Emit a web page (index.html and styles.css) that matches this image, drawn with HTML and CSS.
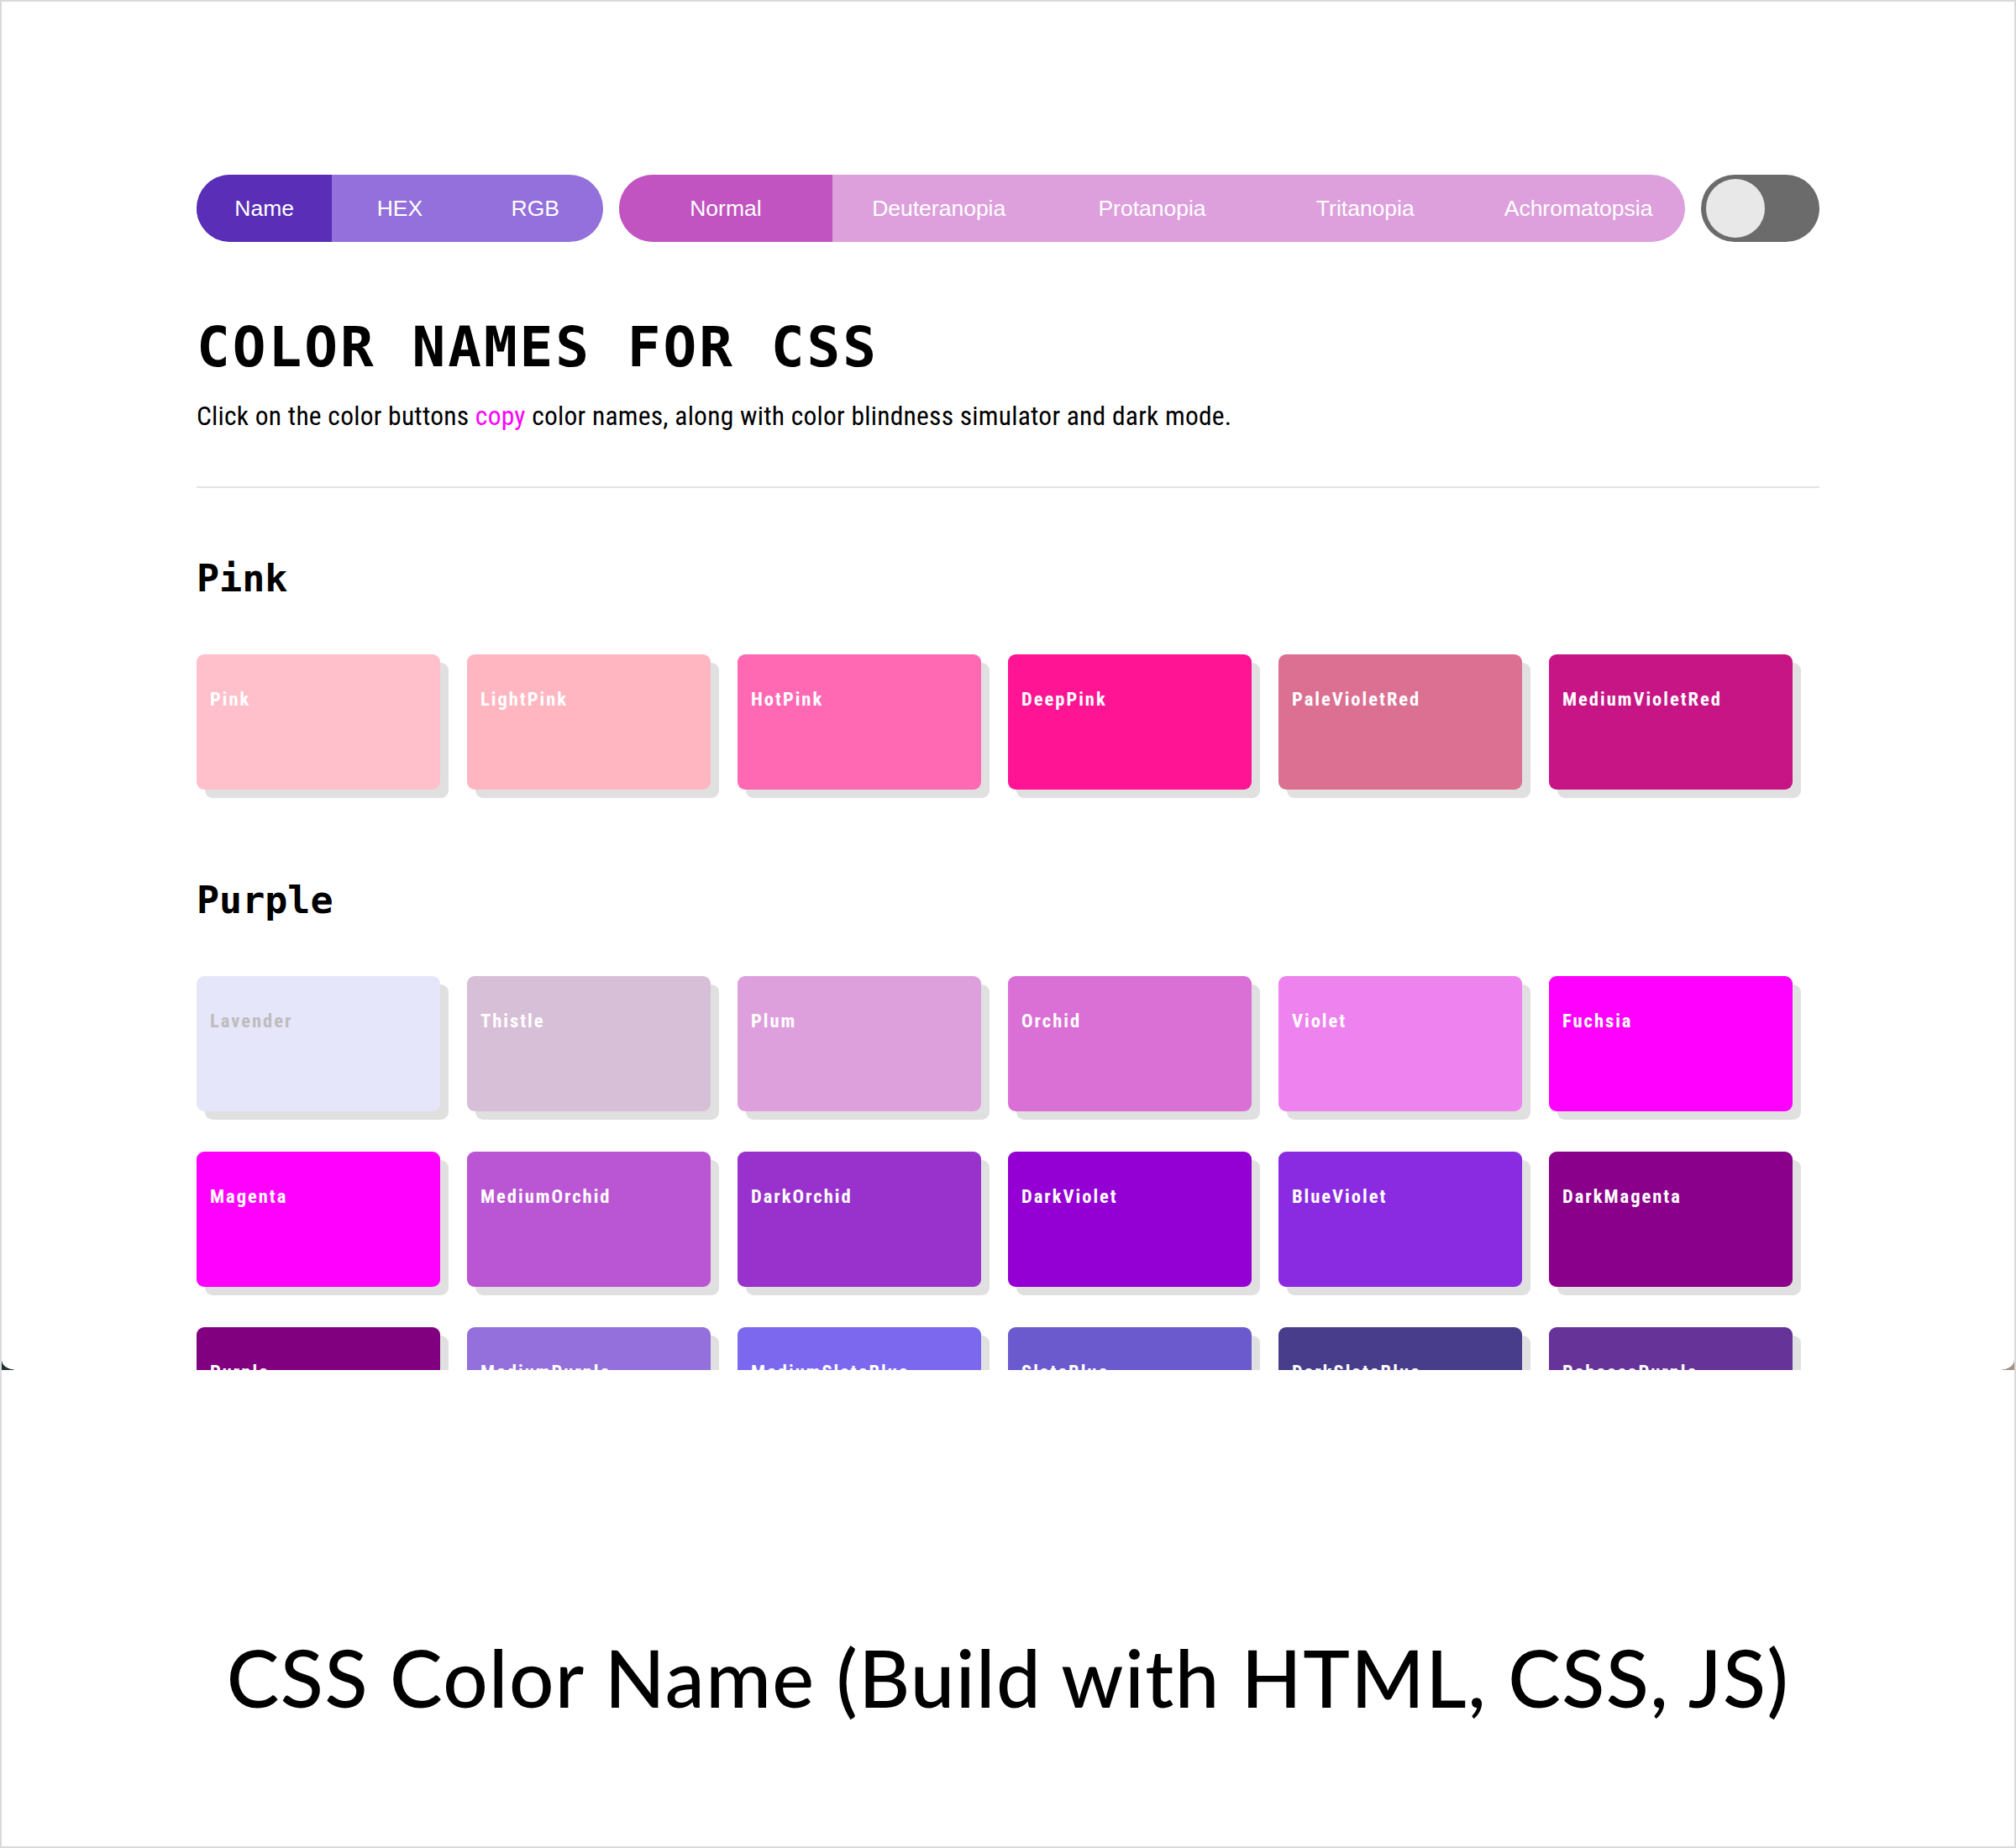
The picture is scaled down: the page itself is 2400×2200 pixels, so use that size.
FILE: index.html
```html
<!DOCTYPE html>
<html lang="en">
<head>
<meta charset="utf-8">
<title>CSS Color Name</title>
<link rel="stylesheet" href="styles.css">
</head>
<body>
<div class="frame">
  <div class="shot">
    <div class="container">
      <div class="toolbar">
        <div class="pill pill-format">
          <button class="seg active">Name</button>
          <button class="seg">HEX</button>
          <button class="seg">RGB</button>
        </div>
        <div class="pill pill-vision">
          <button class="seg active">Normal</button>
          <button class="seg">Deuteranopia</button>
          <button class="seg">Protanopia</button>
          <button class="seg">Tritanopia</button>
          <button class="seg">Achromatopsia</button>
        </div>
        <div class="toggle"><span class="knob"></span></div>
      </div>

      <h1 class="title">COLOR NAMES FOR CSS</h1>
      <p class="intro">Click on the color buttons <span class="copy">copy</span> color names, along with color blindness simulator and dark mode.</p>
      <hr class="divider">

      <section class="group group-pink">
        <h2 class="group-title">Pink</h2>
        <div class="swatches">
          <div class="swatch" style="background:#FFC0CB"><span class="label">Pink</span></div>
          <div class="swatch" style="background:#FFB6C1"><span class="label">LightPink</span></div>
          <div class="swatch" style="background:#FF69B4"><span class="label">HotPink</span></div>
          <div class="swatch" style="background:#FF1493"><span class="label">DeepPink</span></div>
          <div class="swatch" style="background:#DB7093"><span class="label">PaleVioletRed</span></div>
          <div class="swatch" style="background:#C71585"><span class="label">MediumVioletRed</span></div>
        </div>
      </section>

      <section class="group group-purple">
        <h2 class="group-title">Purple</h2>
        <div class="swatches">
          <div class="swatch" style="background:#E6E6FA"><span class="label label-dark">Lavender</span></div>
          <div class="swatch" style="background:#D8BFD8"><span class="label">Thistle</span></div>
          <div class="swatch" style="background:#DDA0DD"><span class="label">Plum</span></div>
          <div class="swatch" style="background:#DA70D6"><span class="label">Orchid</span></div>
          <div class="swatch" style="background:#EE82EE"><span class="label">Violet</span></div>
          <div class="swatch" style="background:#FF00FF"><span class="label">Fuchsia</span></div>
          <div class="swatch" style="background:#FF00FF"><span class="label">Magenta</span></div>
          <div class="swatch" style="background:#BA55D3"><span class="label">MediumOrchid</span></div>
          <div class="swatch" style="background:#9932CC"><span class="label">DarkOrchid</span></div>
          <div class="swatch" style="background:#9400D3"><span class="label">DarkViolet</span></div>
          <div class="swatch" style="background:#8A2BE2"><span class="label">BlueViolet</span></div>
          <div class="swatch" style="background:#8B008B"><span class="label">DarkMagenta</span></div>
          <div class="swatch" style="background:#800080"><span class="label">Purple</span></div>
          <div class="swatch" style="background:#9370DB"><span class="label">MediumPurple</span></div>
          <div class="swatch" style="background:#7B68EE"><span class="label">MediumSlateBlue</span></div>
          <div class="swatch" style="background:#6A5ACD"><span class="label">SlateBlue</span></div>
          <div class="swatch" style="background:#483D8B"><span class="label">DarkSlateBlue</span></div>
          <div class="swatch" style="background:#663399"><span class="label">RebeccaPurple</span></div>
        </div>
      </section>
    </div>
  </div>
  <div class="caption">CSS Color Name (Build with HTML, CSS, JS)</div>
</div>
</body>
</html>
```
FILE: styles.css
```css
* { box-sizing: border-box; }

html, body {
  margin: 0;
  padding: 0;
  background: #ffffff;
}

.frame {
  width: 2400px;
  height: 2200px;
  border: 2px solid #dadada;
  background: #ffffff;
}

.shot {
  position: relative;
  height: 1629px;
  overflow: hidden;
  padding-top: 206px;
  background: #ffffff;
}

.shot::before,
.shot::after {
  content: "";
  position: absolute;
  bottom: 0;
  width: 18px;
  height: 11px;
  z-index: 2;
}

.shot::before {
  left: 0;
  background: radial-gradient(ellipse 18px 11px at 100% 0, transparent 96%, #1e3232 100%);
}

.shot::after {
  right: 0;
  background: radial-gradient(ellipse 18px 11px at 0 0, transparent 96%, #a39383 100%);
}

.container {
  width: 1932px;
  margin: 0 auto;
}

/* ---------- toolbar ---------- */
.toolbar {
  display: flex;
  gap: 19px;
  height: 80px;
}

.pill {
  display: flex;
  border-radius: 40px;
  overflow: hidden;
  height: 80px;
}

.pill-format {
  width: 484px;
  background: #9370db;
}

.pill-vision {
  flex: 1;
  background: #dda0dd;
}

.seg {
  flex: 1;
  border: 0;
  margin: 0;
  padding: 0;
  background: transparent;
  color: #ffffff;
  font-family: "Liberation Sans", Arial, sans-serif;
  font-size: 26.5px;
  height: 80px;
  cursor: pointer;
}

.pill-format .seg.active { background: #5a2eb6; }
.pill-vision .seg.active { background: #c154c1; }

.toggle {
  width: 141px;
  height: 80px;
  border-radius: 40px;
  background: #6b6b6b;
  padding: 5px 6px;
}

.knob {
  display: block;
  width: 70px;
  height: 70px;
  border-radius: 50%;
  background: #e8e8e8;
}

/* ---------- heading ---------- */
.title {
  margin: 93px 0 0;
  font-family: "DejaVu Sans Mono", "Liberation Mono", monospace;
  font-weight: 700;
  font-size: 66px;
  line-height: 66px;
  letter-spacing: 3px;
  color: #000000;
}

.intro {
  margin: 33px 0 0;
  font-family: "Roboto Condensed", Roboto, sans-serif;
  font-size: 31.5px;
  line-height: 31px;
  letter-spacing: 0.25px;
  color: #000000;
}

.copy { color: #ff00ff; }

.divider {
  margin: 68px 0 0;
  border: 0;
  height: 2px;
  background: #e3e3e3;
}

/* ---------- groups ---------- */
.group-pink { margin-top: 85px; }
.group-purple { margin-top: 109px; }

.group-title {
  margin: 0 0 68px;
  font-family: "DejaVu Sans Mono", "Liberation Mono", monospace;
  font-weight: 700;
  font-size: 45px;
  line-height: 45px;
  color: #000000;
}

.swatches {
  display: grid;
  grid-template-columns: repeat(6, 290px);
  column-gap: 32px;
  row-gap: 48px;
}

.swatch {
  height: 161px;
  border-radius: 9px;
  box-shadow: 10px 10px 0 #e0e0e0;
  padding: 42px 16px 0;
}

.label {
  display: block;
  font-family: "Roboto Condensed", Roboto, sans-serif;
  font-weight: 700;
  font-size: 22.5px;
  line-height: 22px;
  letter-spacing: 2px;
  color: #ffffff;
}

.label-dark { color: #bdbdbd; }

/* ---------- caption ---------- */
.caption {
  margin-top: 319px;
  text-align: center;
  font-family: Lato, "Open Sans", sans-serif;
  font-weight: 500;
  font-size: 94px;
  line-height: 94px;
  letter-spacing: 1.4px;
  color: #000000;
}
```
